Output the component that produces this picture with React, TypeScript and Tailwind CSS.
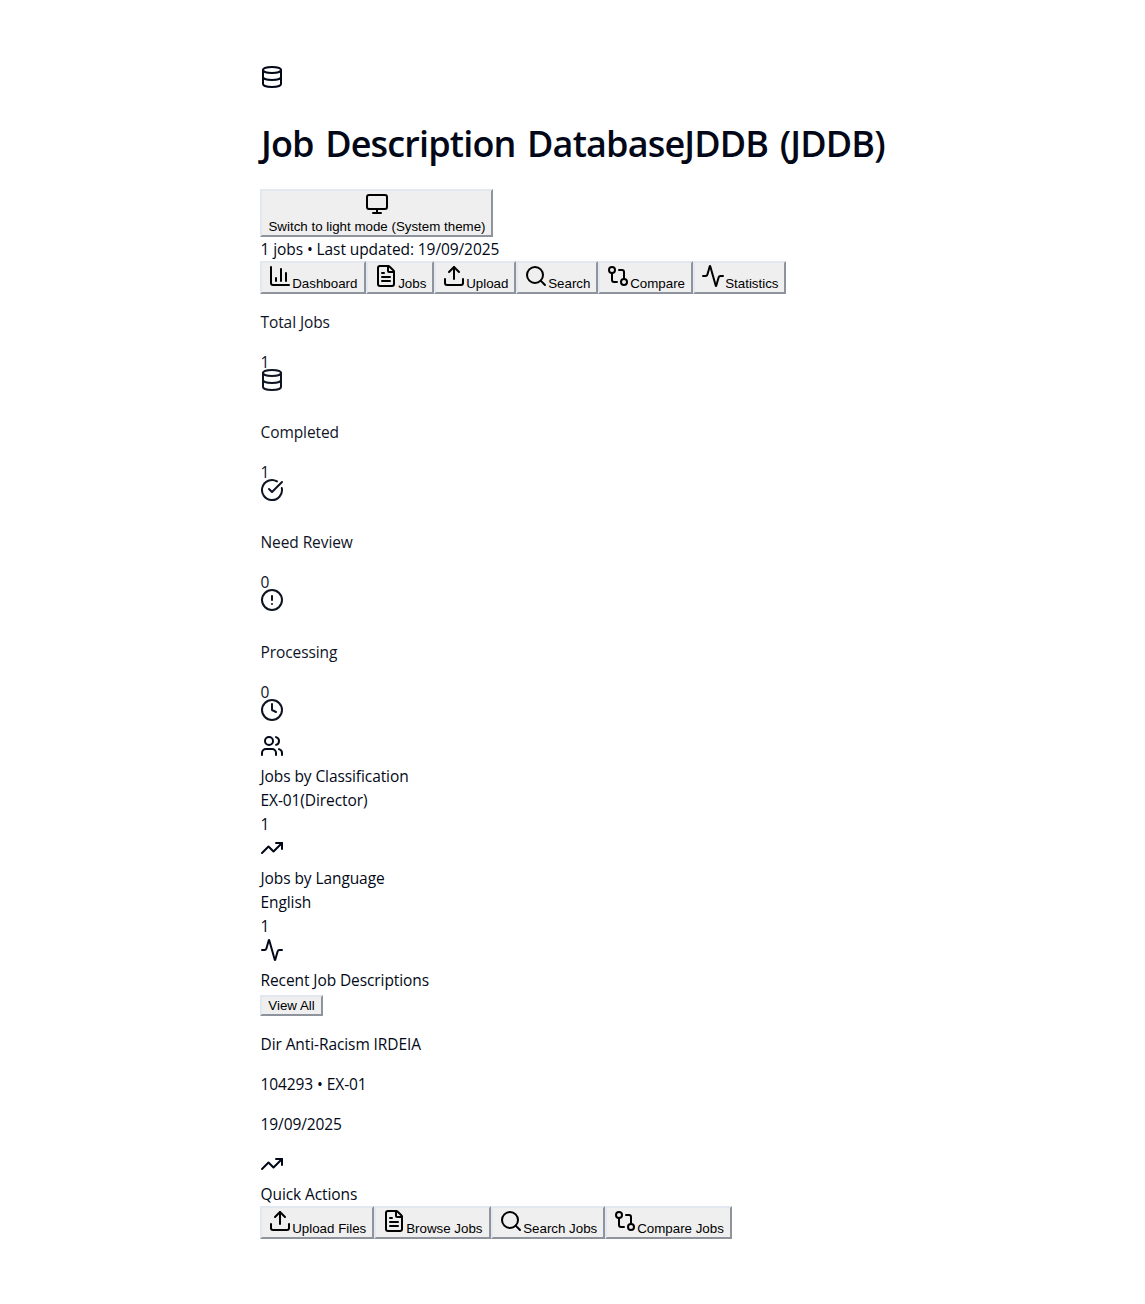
import React from "react";
import { Database, Monitor, BarChart3, FileText, Upload, Search, GitCompare, Activity, CheckCircle, AlertCircle, Clock, Users, TrendingUp, type LucideIcon } from "lucide-react";

function Btn({ icon: Icon, label, w }: { icon: LucideIcon; label: string; w: string }) {
  return (
    <button className={`${w} h-[33px] shrink-0 border-2 border-t-[#e2e8f0] border-l-[#e2e8f0] border-r-[#8f949c] border-b-[#8f949c] bg-[#efefef] px-[6px] py-px text-left font-['Liberation_Sans'] text-[13.333px] leading-[15px] tracking-normal whitespace-nowrap text-black`}>
      <Icon className="inline align-baseline" size={24} />
      <span className="ml-[0.2px]">{label}</span>
    </button>
  );
}

function Stat({ label, value, icon: Icon }: { label: string; value: string; icon: LucideIcon }) {
  return (
    <div className="h-[110px] pt-4 opacity-95">
      <p className="mb-4 pl-[0.5px]">{label}</p>
      <p className="pl-[0.5px]">{value}</p>
      <Icon size={24} className="-mt-[6px]" />
    </div>
  );
}

function Line({ children }: { children: React.ReactNode }) {
  return <p className="pl-[0.5px]">{children}</p>;
}

export default function App() {
  return (
    <main className="min-h-[1304px] bg-white pt-[65px] pl-[260px] font-['Open_Sans',sans-serif] text-[15.5px] leading-6 tracking-[-0.09px] text-[#020817]">
      <Database size={24} />
      <h1 className="mt-[31px] h-[69px] pl-px text-[36px] leading-[48px] font-[560] tracking-[-0.84px] [word-spacing:3px] whitespace-nowrap">Job Description DatabaseJDDB (JDDB)</h1>
      <button className="flex h-12 w-[233px] flex-col items-center border-2 border-t-[#e2e8f0] border-l-[#e2e8f0] border-r-[#8f949c] border-b-[#8f949c] bg-[#efefef] font-['Liberation_Sans'] text-[13.333px] leading-[15px] tracking-normal whitespace-nowrap text-black">
        <Monitor size={24} className="mt-px shrink-0" />
        <span className="mt-[3px] pl-px">Switch to light mode (System theme)</span>
      </button>
      <Line>1 jobs • Last updated: 19/09/2025</Line>
      <div className="flex">
        <Btn icon={BarChart3} label="Dashboard" w="w-[106px]" />
        <Btn icon={FileText} label="Jobs" w="w-[68px]" />
        <Btn icon={Upload} label="Upload" w="w-[82px]" />
        <Btn icon={Search} label="Search" w="w-[82px]" />
        <Btn icon={GitCompare} label="Compare" w="w-[95px]" />
        <Btn icon={Activity} label="Statistics" w="w-[93px]" />
      </div>
      <Stat label="Total Jobs" value="1" icon={Database} />
      <Stat label="Completed" value="1" icon={CheckCircle} />
      <Stat label="Need Review" value="0" icon={AlertCircle} />
      <Stat label="Processing" value="0" icon={Clock} />
      <Users size={24} className="mb-[6px]" />
      <Line>Jobs by Classification</Line>
      <Line>EX-01(Director)</Line>
      <Line>1</Line>
      <TrendingUp size={24} className="mb-[6px]" />
      <Line>Jobs by Language</Line>
      <Line>English</Line>
      <Line>1</Line>
      <Activity size={24} className="mb-[6px]" />
      <Line>Recent Job Descriptions</Line>
      <button className="mt-[3px] block h-[21px] w-[63px] border-2 border-t-[#e2e8f0] border-l-[#e2e8f0] border-r-[#8f949c] border-b-[#8f949c] bg-[#efefef] font-['Liberation_Sans'] text-[13.333px] leading-[15px] tracking-normal text-black">View All</button>
      <div className="flex flex-col gap-4 py-4">
        <Line>Dir Anti-Racism IRDEIA</Line>
        <Line>104293 • EX-01</Line>
        <Line>19/09/2025</Line>
      </div>
      <TrendingUp size={24} className="mb-[6px]" />
      <Line>Quick Actions</Line>
      <div className="flex">
        <Btn icon={Upload} label="Upload Files" w="w-[114px]" />
        <Btn icon={FileText} label="Browse Jobs" w="w-[117px]" />
        <Btn icon={Search} label="Search Jobs" w="w-[114px]" />
        <Btn icon={GitCompare} label="Compare Jobs" w="w-[127px]" />
      </div>
    </main>
  );
}
